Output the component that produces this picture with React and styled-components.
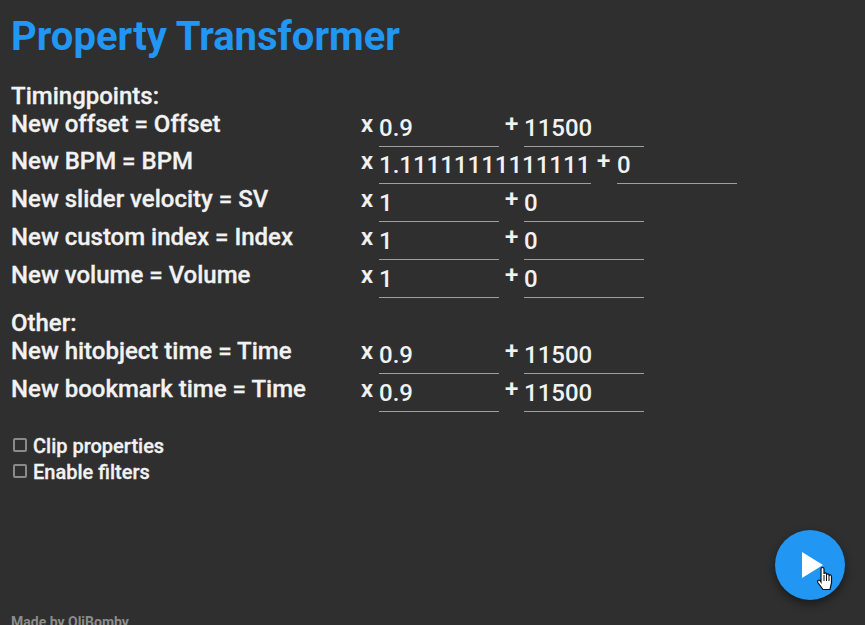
import React from 'react'
import styled, { createGlobalStyle } from 'styled-components'

const GlobalStyle = createGlobalStyle`
    html, body {
        margin: 0;
        height: 100%;
        overflow: hidden;
        background: #2f2f2f;
    }
    body {
        font-family: Roboto, "Liberation Sans", sans-serif;
        color: #f2f2f2;
    }
`

const Page = styled.div`
    padding: 11px 11px 0;
    height: 625px;
    box-sizing: border-box;
    overflow: hidden;
    position: relative;
`

const Title = styled.h1`
    margin: 0 0 18px;
    font-size: 40px;
    line-height: 52px;
    font-weight: 700;
    color: #2196f3;
`

const Section = styled.section`
    margin-bottom: ${(p) => p.$gap || 0}px;
`

const Heading = styled.div`
    height: 28px;
    font-size: 24px;
    line-height: 30px;
    font-weight: 500;
    -webkit-text-stroke: 0.3px #f2f2f2;
`

const Row = styled.div`
    display: flex;
    height: ${(p) => (p.$tight ? 37 : 38)}px;
    align-items: flex-start;
`

const Label = styled.div`
    width: 350px;
    font-size: 24px;
    line-height: ${(p) => (p.$tight ? 28 : 30)}px;
    font-weight: 500;
    -webkit-text-stroke: 0.3px #f2f2f2;
`

const Op = styled.span`
    font-size: 24px;
    line-height: ${(p) => (p.$tight ? 28 : 30)}px;
    font-weight: 500;
    width: ${(p) => p.$width}px;
    margin-left: ${(p) => p.$left || 0}px;
    -webkit-text-stroke: 0.2px #f2f2f2;
`

const NumberInput = styled.input`
    box-sizing: border-box;
    width: ${(p) => p.$width || 120}px;
    height: 100%;
    margin: 0;
    padding: 0;
    border: 0;
    border-bottom: 1px solid #9e9e9e;
    background: transparent;
    color: #f2f2f2;
    font: 500 24px Roboto, sans-serif;
    outline: none;
`

const CheckRow = styled.label`
    display: flex;
    align-items: center;
    height: 26px;
    font-size: 20px;
    font-weight: 500;
    -webkit-text-stroke: 0.3px #f2f2f2;
`

const Box = styled.input`
    appearance: none;
    box-sizing: border-box;
    width: 14px;
    height: 14px;
    margin: 0 6px 2px 2px;
    border: 2px solid #8a8a8a;
    border-radius: 2px;
    background: transparent;
`

const Footer = styled.div`
    position: absolute;
    left: 11px;
    top: 614px;
    font-size: 14px;
    line-height: 16px;
    font-weight: 700;
    color: #8c8c8c;
`

const Fab = styled.button`
    position: absolute;
    right: 20px;
    top: 530px;
    width: 70px;
    height: 70px;
    padding: 0 0 0 5px;
    border: 0;
    border-radius: 50%;
    background: #2196f3;
    box-shadow: 0 4px 10px rgba(0, 0, 0, 0.45);
    display: flex;
    align-items: center;
    justify-content: center;
`

const Cursor = styled.svg`
    position: absolute;
    left: 42px;
    top: 37px;
`

const timing = [
    ['New offset = Offset', '0.9', '11500'],
    ['New BPM = BPM', '1.11111111111111', '0'],
    ['New slider velocity = SV', '1', '0'],
    ['New custom index = Index', '1', '0'],
    ['New volume = Volume', '1', '0'],
]

const other = [
    ['New hitobject time = Time', '0.9', '11500'],
    ['New bookmark time = Time', '0.9', '11500'],
]

function PropertyRow({ label, mult, add }) {
    const wide = mult.length > 8
    return (
        <Row $tight={wide}>
            <Label $tight={wide}>{label}</Label>
            <Op $width={18} $tight={wide}>x</Op>
            <NumberInput $width={wide ? 212 : 120} defaultValue={mult} />
            <Op $width={wide ? 20 : 19} $left={6} $tight={wide}>+</Op>
            <NumberInput defaultValue={add} />
        </Row>
    )
}

export default function App() {
    return (
        <Page>
            <GlobalStyle />
            <Title>Property Transformer</Title>
            <Section $gap={10}>
                <Heading>Timingpoints:</Heading>
                {timing.map(([label, mult, add]) => (
                    <PropertyRow key={label} label={label} mult={mult} add={add} />
                ))}
            </Section>
            <Section $gap={21}>
                <Heading>Other:</Heading>
                {other.map(([label, mult, add]) => (
                    <PropertyRow key={label} label={label} mult={mult} add={add} />
                ))}
            </Section>
            <CheckRow><Box type="checkbox" />Clip properties</CheckRow>
            <CheckRow><Box type="checkbox" />Enable filters</CheckRow>
            <Footer>Made by OliBomby</Footer>
            <Fab aria-label="Run">
                <svg width="21" height="26" viewBox="0 0 21 26">
                    <path d="M0 0 L21 13 L0 26 Z" fill="#fff" />
                </svg>
                <Cursor width="17" height="24" viewBox="0 0 17 24">
                    <path
                        d="M4 2 C4 0 7 0 7 2 V7 C7 5.5 9.5 5.5 9.5 7 V8 C9.5 6.5 12 6.5 12 8 V9 C12 7.5 14.5 7.5 14.5 9.5 V16 L13 22.5 H6 L0.8 15.5 C0 13.5 2 12.5 3 13.5 L4 15 Z"
                        fill="#fff"
                        stroke="#111"
                        strokeWidth="1.2"
                    />
                    <path d="M7 8 V14 M9.5 8 V14 M12 9 V14" stroke="#111" strokeWidth="1" fill="none" />
                </Cursor>
            </Fab>
        </Page>
    )
}
